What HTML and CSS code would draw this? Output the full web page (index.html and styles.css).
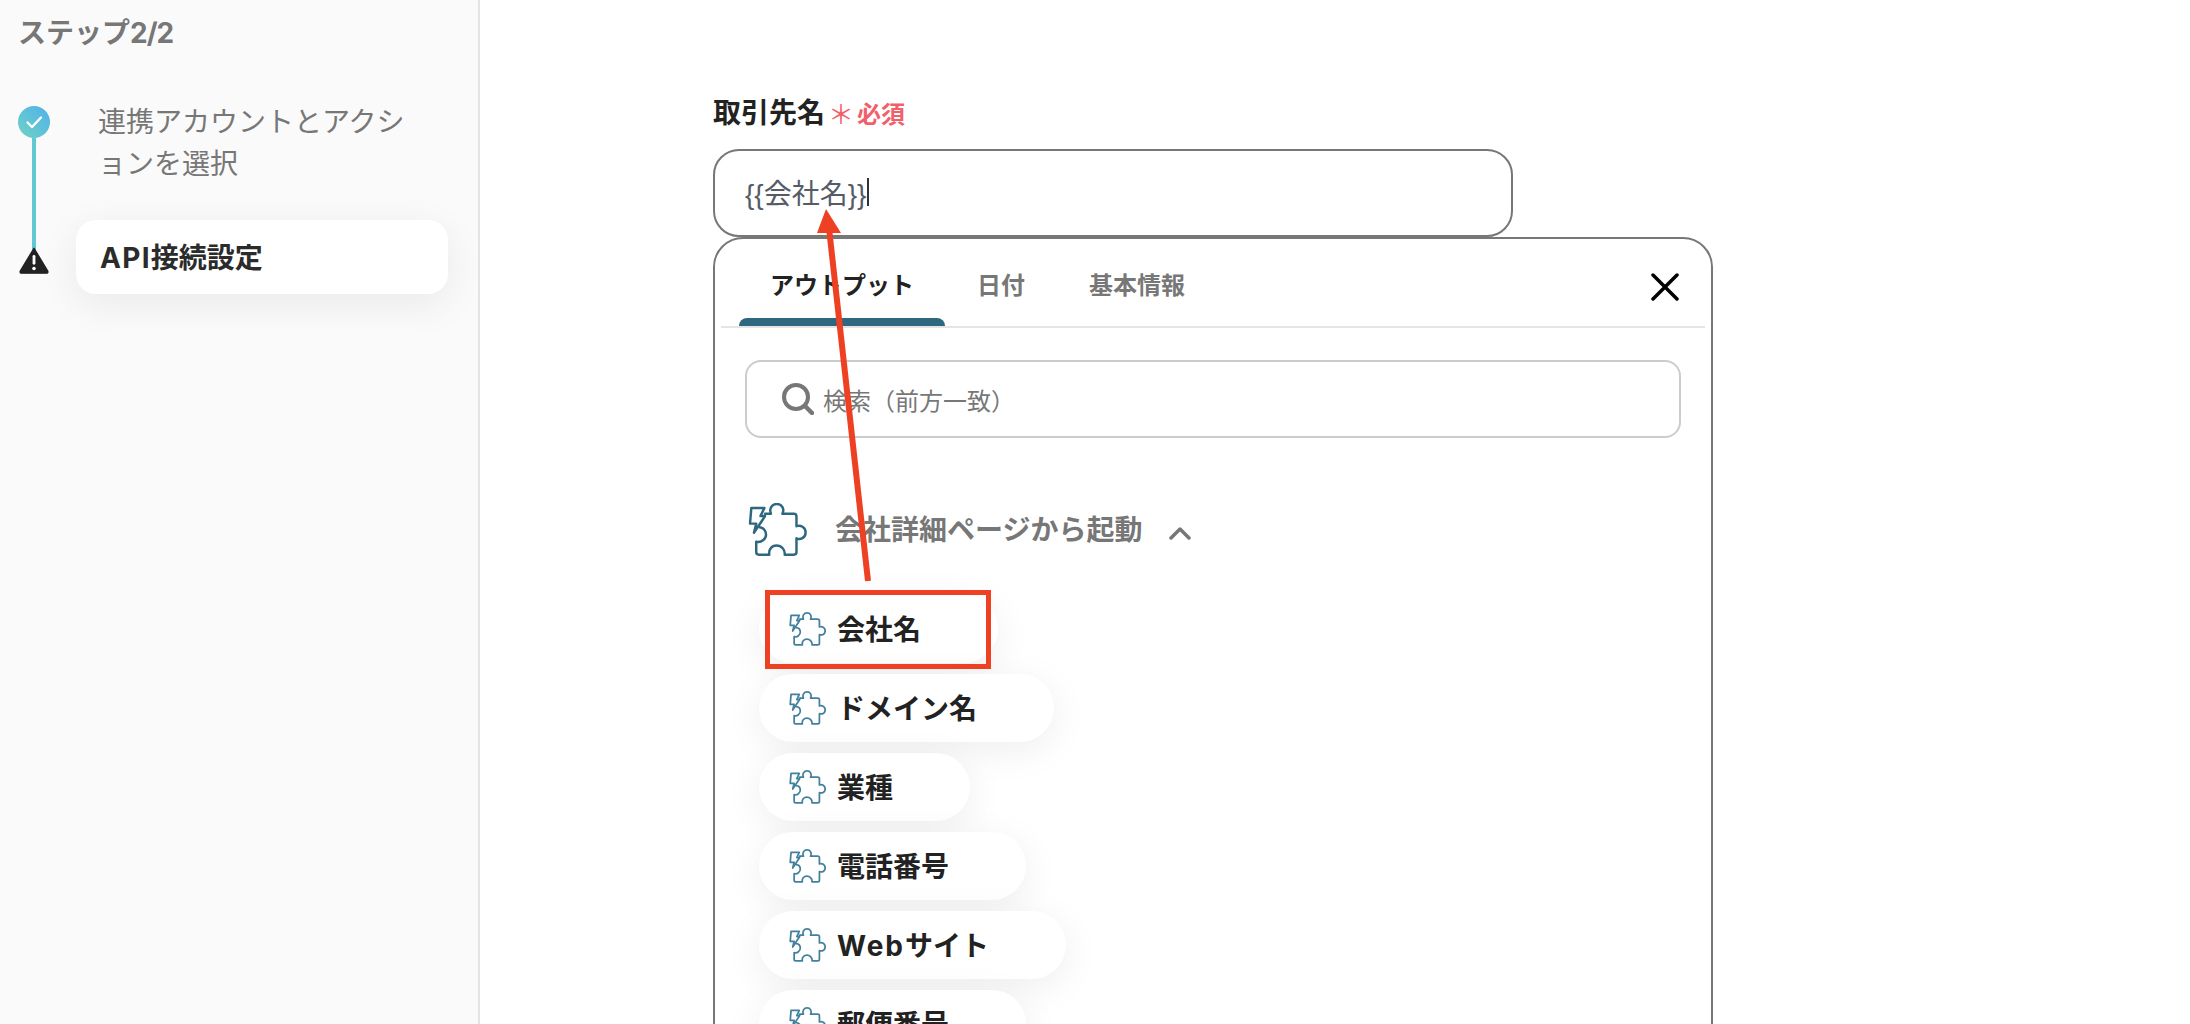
FILE: index.html
```html
<!DOCTYPE html>
<html lang="ja">
<head>
<meta charset="utf-8">
<title>API接続設定</title>
<link rel="stylesheet" href="styles.css">
</head>
<body>
<svg class="defs" width="0" height="0" aria-hidden="true">
  <defs>
    <symbol id="puzzle" viewBox="20 22 180 162">
      <path d="M30 37H70L58 62H72L38 113L45 85H26Z"/>
      <path d="M72 55H90C84 40 92 25 108 25C124 25 132 40 125 55H160Q168 55 168 63V93C180 88 196 96 196 112C196 128 180 136 168 130V172Q168 180 160 180H132C134 165 122 152 107 152C92 152 82 165 85 180H53Q45 180 45 172V140C60 145 75 132 75 118C75 105 65 97 55 96"/>
    </symbol>
    <linearGradient id="checkGrad" x1="0" y1="1" x2="1" y2="0">
      <stop offset="0" stop-color="#6fd3c4"/>
      <stop offset="1" stop-color="#4fb0ec"/>
    </linearGradient>
  </defs>
</svg>
<div class="app">
  <aside class="sidebar">
    <h2 class="side-title">ステップ<span class="tight">2/2</span></h2>
    <div class="steps">
      <div class="rail">
        <svg class="check" viewBox="0 0 32 32"><circle cx="16" cy="16" r="16" fill="url(#checkGrad)"/><path d="M9.500 16.500L14 21L23 11.500" fill="none" stroke="#fff" stroke-width="2.400" stroke-linecap="round" stroke-linejoin="round"/></svg>
        <span class="rail-line"></span>
        <svg class="warn" viewBox="0 0 32 30"><path d="M16 2L30.500 26Q31.500 28.500 29 28.500H3Q.5 28.500 1.500 26Z" fill="#222" stroke="#222" stroke-linejoin="round" stroke-width="1.500"/><rect x="14.500" y="9" width="3" height="10.500" rx="1.500" fill="#fff"/><circle cx="16" cy="23.500" r="1.900" fill="#fff"/></svg>
      </div>
      <div class="step-labels">
        <p class="step-done">連携アカウントとアクションを選択</p>
        <div class="step-card"><span><span class="wide">API</span>接続設定</span></div>
      </div>
    </div>
  </aside>
  <main class="main">
    <div class="field-label"><span class="label-text">取引先名</span><span class="req-star">＊</span><span class="req">必須</span></div>
    <div class="text-input"><span>{{会社名}}</span><span class="caret"></span></div>
    <section class="panel">
      <div class="tabs">
        <div class="tab tab-active">アウトプット</div>
        <div class="tab">日付</div>
        <div class="tab">基本情報</div>
        <svg class="close" viewBox="0 0 28 28"><path d="M2 2L26 26M26 2L2 26" stroke="#000" stroke-width="3.500" stroke-linecap="round"/></svg>
      </div>
      <div class="search">
        <svg class="search-icon" viewBox="0 0 32 32"><circle cx="14" cy="14" r="12" fill="none" stroke="#777" stroke-width="4"/><path d="M23 23L30 30" stroke="#777" stroke-width="4.500" stroke-linecap="round"/></svg>
        <span>検索（前方一致）</span>
      </div>
      <div class="section-head">
        <svg class="puzzle puzzle-big"><use href="#puzzle"/></svg>
        <span class="section-title">会社詳細ページから起動</span>
        <svg class="chevron" viewBox="0 0 22 14"><path d="M2 12L11 3L20 12" fill="none" stroke="#777" stroke-width="3.500" stroke-linecap="round" stroke-linejoin="round"/></svg>
      </div>
      <div class="chips">
        <div class="chip"><svg class="puzzle puzzle-small"><use href="#puzzle"/></svg><span class="chip-text">会社名</span></div>
        <div class="chip"><svg class="puzzle puzzle-small"><use href="#puzzle"/></svg><span class="chip-text">ドメイン名</span></div>
        <div class="chip"><svg class="puzzle puzzle-small"><use href="#puzzle"/></svg><span class="chip-text">業種</span></div>
        <div class="chip"><svg class="puzzle puzzle-small"><use href="#puzzle"/></svg><span class="chip-text">電話番号</span></div>
        <div class="chip"><svg class="puzzle puzzle-small"><use href="#puzzle"/></svg><span class="chip-text"><span class="web">Web</span>サイト</span></div>
        <div class="chip"><svg class="puzzle puzzle-small"><use href="#puzzle"/></svg><span class="chip-text">郵便番号</span></div>
      </div>
    </section>
  </main>
</div>
<div class="mark-box"></div>
<svg class="mark-arrow" viewBox="0 0 2190 1024" aria-hidden="true">
  <path d="M868 581L829 228" stroke="#ee4023" stroke-width="6" fill="none"/>
  <path d="M826 209L841 233H817Z" fill="#ee4023"/>
</svg>
</body>
</html>
```
FILE: styles.css
```css
* { box-sizing: border-box; }
html, body { margin: 0; height: 1024px; overflow: hidden; background: #fff; }
body { position: relative; font-family: Inter, "Noto Sans CJK JP", sans-serif; color: #222; }
.defs { position: absolute; }
.app { display: flex; height: 1024px; overflow: hidden; }

.sidebar { flex: 0 0 480px; background: #fafafa; border-right: 2px solid #e4e4e4; padding-top: 12px; }
.side-title { margin: 0 0 46px 18px; font-size: 28px; line-height: 42px; font-weight: 700; color: #777; }
.tight { letter-spacing: -1px; }
.steps { display: flex; padding-left: 18px; }
.rail { width: 32px; padding-top: 6px; display: flex; flex-direction: column; align-items: center; }
.check { width: 32px; height: 32px; display: block; flex: none; }
.rail-line { width: 4px; height: 112px; background: #62c9d4; }
.warn { width: 30px; height: 29px; margin-top: -4px; display: block; flex: none; }
.step-labels { margin-left: 26px; width: 372px; }
.step-done { margin: 0 0 35px; padding: 1px 0 0 22px; width: 340px; font-size: 28px; line-height: 42px; color: #777; }
.step-card { height: 74px; padding: 0 0 2px 24px; display: flex; align-items: center; background: #fff; border-radius: 20px; font-size: 28px; font-weight: 700; color: #2b2b2b; box-shadow: 0 10px 40px rgba(0, 0, 0, .07); }
.wide { letter-spacing: 1.3px; }

.main { flex: 1; padding: 92px 0 0 233px; }
.field-label { height: 40px; margin-bottom: 17px; display: flex; align-items: center; font-size: 28px; font-weight: 700; color: #222; }
.label-text { margin-bottom: 2px; }
.req-star { margin-left: 2px; font-size: 26px; font-weight: 400; color: #f25f6b; width: 28px; text-align: center; }
.req { margin-left: 2px; font-size: 24px; color: #f25f6b; }
.text-input { width: 800px; height: 88px; display: flex; align-items: center; padding: 0 0 2px 30px; border: 2px solid #777; border-radius: 26px; font-family: "Liberation Sans", "Noto Sans CJK JP", sans-serif; font-size: 28px; color: #555c66; }
.caret { width: 2px; height: 28px; margin-left: 1px; background: #333; }

.panel { width: 1000px; height: 1000px; border: 2px solid #777; border-radius: 30px; background: #fff; padding: 0 6px; }
.tabs { position: relative; display: flex; height: 89px; padding-left: 18px; border-bottom: 2px solid #e5e5e5; }
.tab { padding: 0 32px; height: 87px; line-height: 94px; font-size: 24px; font-weight: 700; color: #777; }
.tab-active { color: #222; position: relative; padding: 0 31px; }
.tab-active::after { content: ""; position: absolute; left: 0; right: 0; bottom: 0; height: 8px; background: #2e6780; border-radius: 8px 8px 0 0; }
.close { position: absolute; right: 26px; top: 34px; width: 28px; height: 28px; }

.search { margin: 32px 0 0 24px; width: 936px; height: 78px; display: flex; align-items: center; gap: 9px; padding-left: 35px; border: 2px solid #ccc; border-radius: 16px; font-size: 24px; color: #777; }
.search-icon { width: 32px; height: 32px; flex: none; }

.section-head { margin: 65px 0 0 27px; height: 53px; display: flex; align-items: center; }
.puzzle { fill: none; stroke: #2e6780; stroke-linejoin: round; stroke-linecap: round; display: block; flex: none; }
.puzzle-big { width: 59px; height: 53px; stroke-width: 7.5px; }
.puzzle-small { width: 37px; height: 34px; stroke-width: 8.5px; stroke: #43809d; }
.section-title { margin: 0 0 3px 28px; font-size: 28px; font-weight: 700; color: #777; }
.chevron { width: 22px; height: 14px; margin: 6px 0 0 27px; flex: none; }

.chips { margin: 39px 0 0 38px; display: flex; flex-direction: column; align-items: flex-start; gap: 11px; }
.chip { height: 68px; display: flex; align-items: center; gap: 11px; padding: 0 77px 0 30px; border-radius: 34px; background: #fff; font-size: 28px; font-weight: 700; color: #222; box-shadow: 0 8px 38px rgba(0, 0, 0, .07); }
.chip-text { margin-bottom: 2px; }
.web { letter-spacing: 2px; }

.mark-box { position: absolute; left: 765px; top: 590px; width: 226px; height: 79px; border: 5px solid #ee4023; }
.mark-arrow { position: absolute; left: 0; top: 0; width: 2190px; height: 1024px; pointer-events: none; }
```
